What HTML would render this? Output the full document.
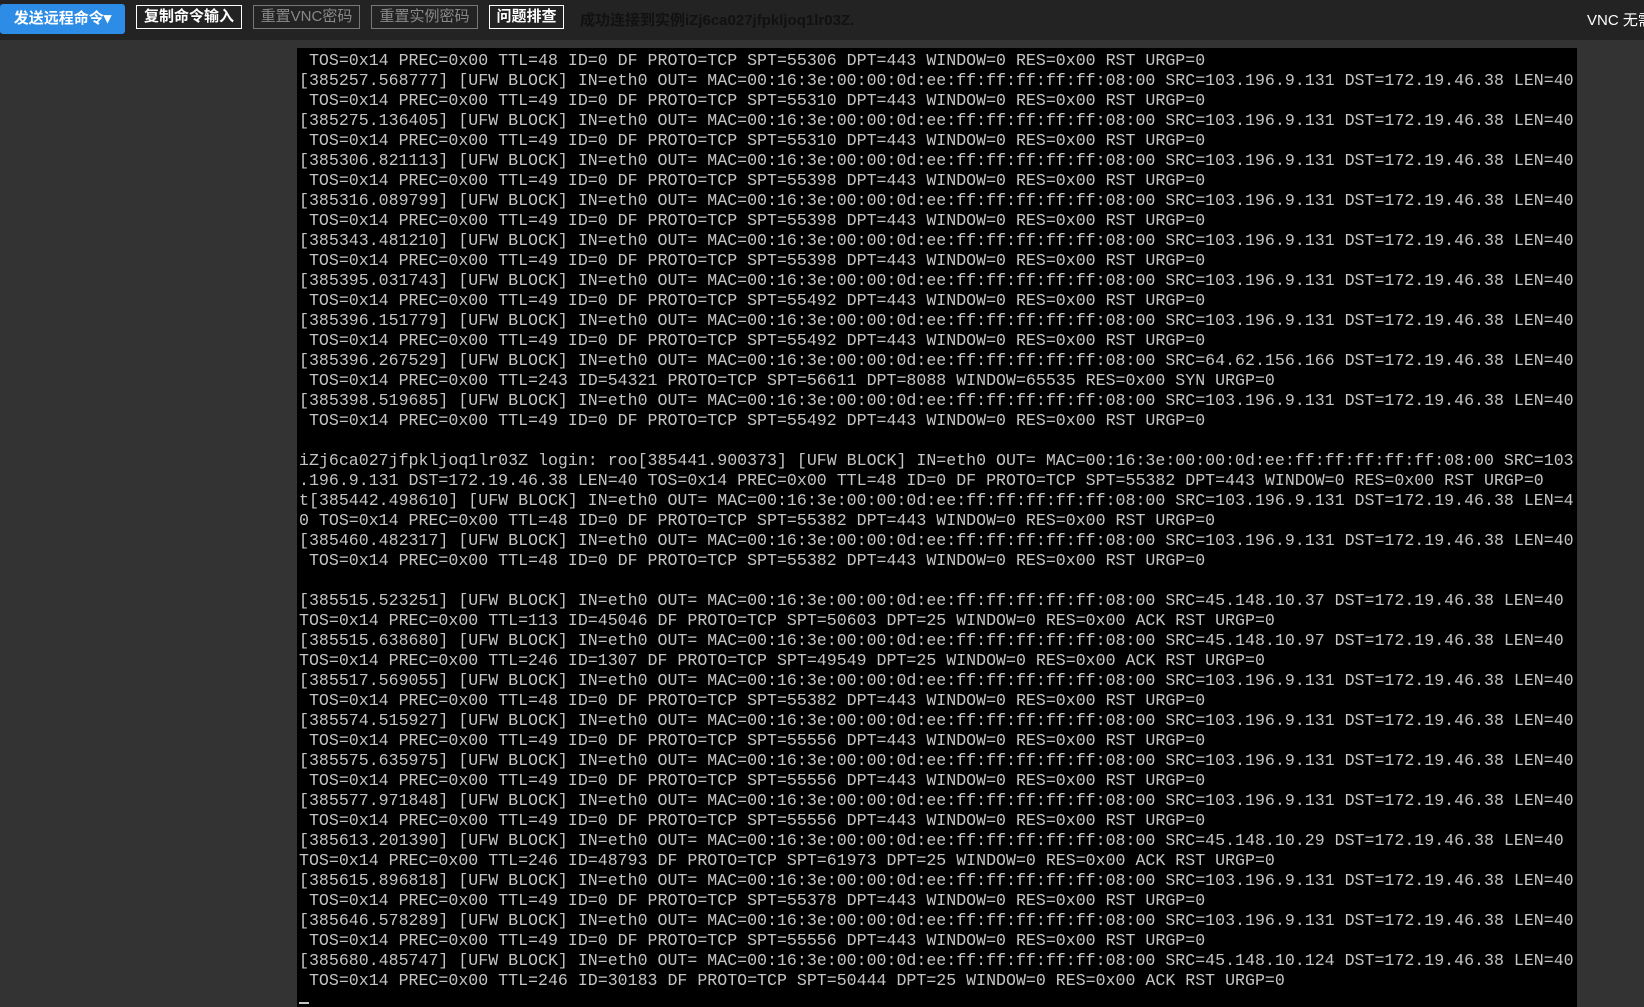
<!DOCTYPE html>
<html style="overflow:hidden;height:1007px"><head><meta charset="utf-8"><style>
html,body{overflow:hidden}
body{margin:0;width:1644px;height:1007px;background:#333;position:relative;font-family:"Liberation Sans","Noto Sans CJK SC",sans-serif}
.bar{position:absolute;left:0;top:0;width:1644px;height:40px;background:#232323}
.btn{position:absolute;top:5px;height:24px;box-sizing:border-box;border:1px solid #fff;color:#fff;font-size:15px;line-height:22px;text-align:center}
.dis{border-color:#777;color:#888}
.term{position:absolute;left:297px;top:48px;width:1280px;height:959px;background:#000;overflow:hidden}
pre{margin:0;position:absolute;left:2px;top:3px;font-family:"Liberation Mono",monospace;font-size:16.6px;line-height:20px;color:#c4c4c4;white-space:pre}
</style></head><body>
<div class="bar"></div>
<div class="btn" style="left:0;top:4px;width:125px;height:30px;border:none;background:#2d8ce6;border-radius:3px;line-height:30px;font-weight:bold">发送远程命令▾</div>
<div class="btn" style="left:136px;width:106px;font-weight:bold">复制命令输入</div>
<div class="btn dis" style="left:253px;width:107px">重置VNC密码</div>
<div class="btn dis" style="left:371px;width:107px">重置实例密码</div>
<div class="btn" style="left:489px;width:75px;font-weight:bold">问题排查</div>
<div style="position:absolute;left:580px;top:9px;font-size:15px;font-weight:bold;color:#111">成功连接到实例iZj6ca027jfpkljoq1lr03Z.</div>
<div style="position:absolute;left:1587px;top:9px;font-size:15px;color:#fff;white-space:nowrap">VNC 无需</div>
<div class="term"><pre> TOS=0x14 PREC=0x00 TTL=48 ID=0 DF PROTO=TCP SPT=55306 DPT=443 WINDOW=0 RES=0x00 RST URGP=0
[385257.568777] [UFW BLOCK] IN=eth0 OUT= MAC=00:16:3e:00:00:0d:ee:ff:ff:ff:ff:ff:08:00 SRC=103.196.9.131 DST=172.19.46.38 LEN=40
 TOS=0x14 PREC=0x00 TTL=49 ID=0 DF PROTO=TCP SPT=55310 DPT=443 WINDOW=0 RES=0x00 RST URGP=0
[385275.136405] [UFW BLOCK] IN=eth0 OUT= MAC=00:16:3e:00:00:0d:ee:ff:ff:ff:ff:ff:08:00 SRC=103.196.9.131 DST=172.19.46.38 LEN=40
 TOS=0x14 PREC=0x00 TTL=49 ID=0 DF PROTO=TCP SPT=55310 DPT=443 WINDOW=0 RES=0x00 RST URGP=0
[385306.821113] [UFW BLOCK] IN=eth0 OUT= MAC=00:16:3e:00:00:0d:ee:ff:ff:ff:ff:ff:08:00 SRC=103.196.9.131 DST=172.19.46.38 LEN=40
 TOS=0x14 PREC=0x00 TTL=49 ID=0 DF PROTO=TCP SPT=55398 DPT=443 WINDOW=0 RES=0x00 RST URGP=0
[385316.089799] [UFW BLOCK] IN=eth0 OUT= MAC=00:16:3e:00:00:0d:ee:ff:ff:ff:ff:ff:08:00 SRC=103.196.9.131 DST=172.19.46.38 LEN=40
 TOS=0x14 PREC=0x00 TTL=49 ID=0 DF PROTO=TCP SPT=55398 DPT=443 WINDOW=0 RES=0x00 RST URGP=0
[385343.481210] [UFW BLOCK] IN=eth0 OUT= MAC=00:16:3e:00:00:0d:ee:ff:ff:ff:ff:ff:08:00 SRC=103.196.9.131 DST=172.19.46.38 LEN=40
 TOS=0x14 PREC=0x00 TTL=49 ID=0 DF PROTO=TCP SPT=55398 DPT=443 WINDOW=0 RES=0x00 RST URGP=0
[385395.031743] [UFW BLOCK] IN=eth0 OUT= MAC=00:16:3e:00:00:0d:ee:ff:ff:ff:ff:ff:08:00 SRC=103.196.9.131 DST=172.19.46.38 LEN=40
 TOS=0x14 PREC=0x00 TTL=49 ID=0 DF PROTO=TCP SPT=55492 DPT=443 WINDOW=0 RES=0x00 RST URGP=0
[385396.151779] [UFW BLOCK] IN=eth0 OUT= MAC=00:16:3e:00:00:0d:ee:ff:ff:ff:ff:ff:08:00 SRC=103.196.9.131 DST=172.19.46.38 LEN=40
 TOS=0x14 PREC=0x00 TTL=49 ID=0 DF PROTO=TCP SPT=55492 DPT=443 WINDOW=0 RES=0x00 RST URGP=0
[385396.267529] [UFW BLOCK] IN=eth0 OUT= MAC=00:16:3e:00:00:0d:ee:ff:ff:ff:ff:ff:08:00 SRC=64.62.156.166 DST=172.19.46.38 LEN=40
 TOS=0x14 PREC=0x00 TTL=243 ID=54321 PROTO=TCP SPT=56611 DPT=8088 WINDOW=65535 RES=0x00 SYN URGP=0
[385398.519685] [UFW BLOCK] IN=eth0 OUT= MAC=00:16:3e:00:00:0d:ee:ff:ff:ff:ff:ff:08:00 SRC=103.196.9.131 DST=172.19.46.38 LEN=40
 TOS=0x14 PREC=0x00 TTL=49 ID=0 DF PROTO=TCP SPT=55492 DPT=443 WINDOW=0 RES=0x00 RST URGP=0

iZj6ca027jfpkljoq1lr03Z login: roo[385441.900373] [UFW BLOCK] IN=eth0 OUT= MAC=00:16:3e:00:00:0d:ee:ff:ff:ff:ff:ff:08:00 SRC=103
.196.9.131 DST=172.19.46.38 LEN=40 TOS=0x14 PREC=0x00 TTL=48 ID=0 DF PROTO=TCP SPT=55382 DPT=443 WINDOW=0 RES=0x00 RST URGP=0
t[385442.498610] [UFW BLOCK] IN=eth0 OUT= MAC=00:16:3e:00:00:0d:ee:ff:ff:ff:ff:ff:08:00 SRC=103.196.9.131 DST=172.19.46.38 LEN=4
0 TOS=0x14 PREC=0x00 TTL=48 ID=0 DF PROTO=TCP SPT=55382 DPT=443 WINDOW=0 RES=0x00 RST URGP=0
[385460.482317] [UFW BLOCK] IN=eth0 OUT= MAC=00:16:3e:00:00:0d:ee:ff:ff:ff:ff:ff:08:00 SRC=103.196.9.131 DST=172.19.46.38 LEN=40
 TOS=0x14 PREC=0x00 TTL=48 ID=0 DF PROTO=TCP SPT=55382 DPT=443 WINDOW=0 RES=0x00 RST URGP=0

[385515.523251] [UFW BLOCK] IN=eth0 OUT= MAC=00:16:3e:00:00:0d:ee:ff:ff:ff:ff:ff:08:00 SRC=45.148.10.37 DST=172.19.46.38 LEN=40
TOS=0x14 PREC=0x00 TTL=113 ID=45046 DF PROTO=TCP SPT=50603 DPT=25 WINDOW=0 RES=0x00 ACK RST URGP=0
[385515.638680] [UFW BLOCK] IN=eth0 OUT= MAC=00:16:3e:00:00:0d:ee:ff:ff:ff:ff:ff:08:00 SRC=45.148.10.97 DST=172.19.46.38 LEN=40
TOS=0x14 PREC=0x00 TTL=246 ID=1307 DF PROTO=TCP SPT=49549 DPT=25 WINDOW=0 RES=0x00 ACK RST URGP=0
[385517.569055] [UFW BLOCK] IN=eth0 OUT= MAC=00:16:3e:00:00:0d:ee:ff:ff:ff:ff:ff:08:00 SRC=103.196.9.131 DST=172.19.46.38 LEN=40
 TOS=0x14 PREC=0x00 TTL=48 ID=0 DF PROTO=TCP SPT=55382 DPT=443 WINDOW=0 RES=0x00 RST URGP=0
[385574.515927] [UFW BLOCK] IN=eth0 OUT= MAC=00:16:3e:00:00:0d:ee:ff:ff:ff:ff:ff:08:00 SRC=103.196.9.131 DST=172.19.46.38 LEN=40
 TOS=0x14 PREC=0x00 TTL=49 ID=0 DF PROTO=TCP SPT=55556 DPT=443 WINDOW=0 RES=0x00 RST URGP=0
[385575.635975] [UFW BLOCK] IN=eth0 OUT= MAC=00:16:3e:00:00:0d:ee:ff:ff:ff:ff:ff:08:00 SRC=103.196.9.131 DST=172.19.46.38 LEN=40
 TOS=0x14 PREC=0x00 TTL=49 ID=0 DF PROTO=TCP SPT=55556 DPT=443 WINDOW=0 RES=0x00 RST URGP=0
[385577.971848] [UFW BLOCK] IN=eth0 OUT= MAC=00:16:3e:00:00:0d:ee:ff:ff:ff:ff:ff:08:00 SRC=103.196.9.131 DST=172.19.46.38 LEN=40
 TOS=0x14 PREC=0x00 TTL=49 ID=0 DF PROTO=TCP SPT=55556 DPT=443 WINDOW=0 RES=0x00 RST URGP=0
[385613.201390] [UFW BLOCK] IN=eth0 OUT= MAC=00:16:3e:00:00:0d:ee:ff:ff:ff:ff:ff:08:00 SRC=45.148.10.29 DST=172.19.46.38 LEN=40
TOS=0x14 PREC=0x00 TTL=246 ID=48793 DF PROTO=TCP SPT=61973 DPT=25 WINDOW=0 RES=0x00 ACK RST URGP=0
[385615.896818] [UFW BLOCK] IN=eth0 OUT= MAC=00:16:3e:00:00:0d:ee:ff:ff:ff:ff:ff:08:00 SRC=103.196.9.131 DST=172.19.46.38 LEN=40
 TOS=0x14 PREC=0x00 TTL=49 ID=0 DF PROTO=TCP SPT=55378 DPT=443 WINDOW=0 RES=0x00 RST URGP=0
[385646.578289] [UFW BLOCK] IN=eth0 OUT= MAC=00:16:3e:00:00:0d:ee:ff:ff:ff:ff:ff:08:00 SRC=103.196.9.131 DST=172.19.46.38 LEN=40
 TOS=0x14 PREC=0x00 TTL=49 ID=0 DF PROTO=TCP SPT=55556 DPT=443 WINDOW=0 RES=0x00 RST URGP=0
[385680.485747] [UFW BLOCK] IN=eth0 OUT= MAC=00:16:3e:00:00:0d:ee:ff:ff:ff:ff:ff:08:00 SRC=45.148.10.124 DST=172.19.46.38 LEN=40
 TOS=0x14 PREC=0x00 TTL=246 ID=30183 DF PROTO=TCP SPT=50444 DPT=25 WINDOW=0 RES=0x00 ACK RST URGP=0
</pre><div style="position:absolute;left:2px;top:954px;width:10px;height:2px;background:#c4c4c4"></div></div>
</body></html>
